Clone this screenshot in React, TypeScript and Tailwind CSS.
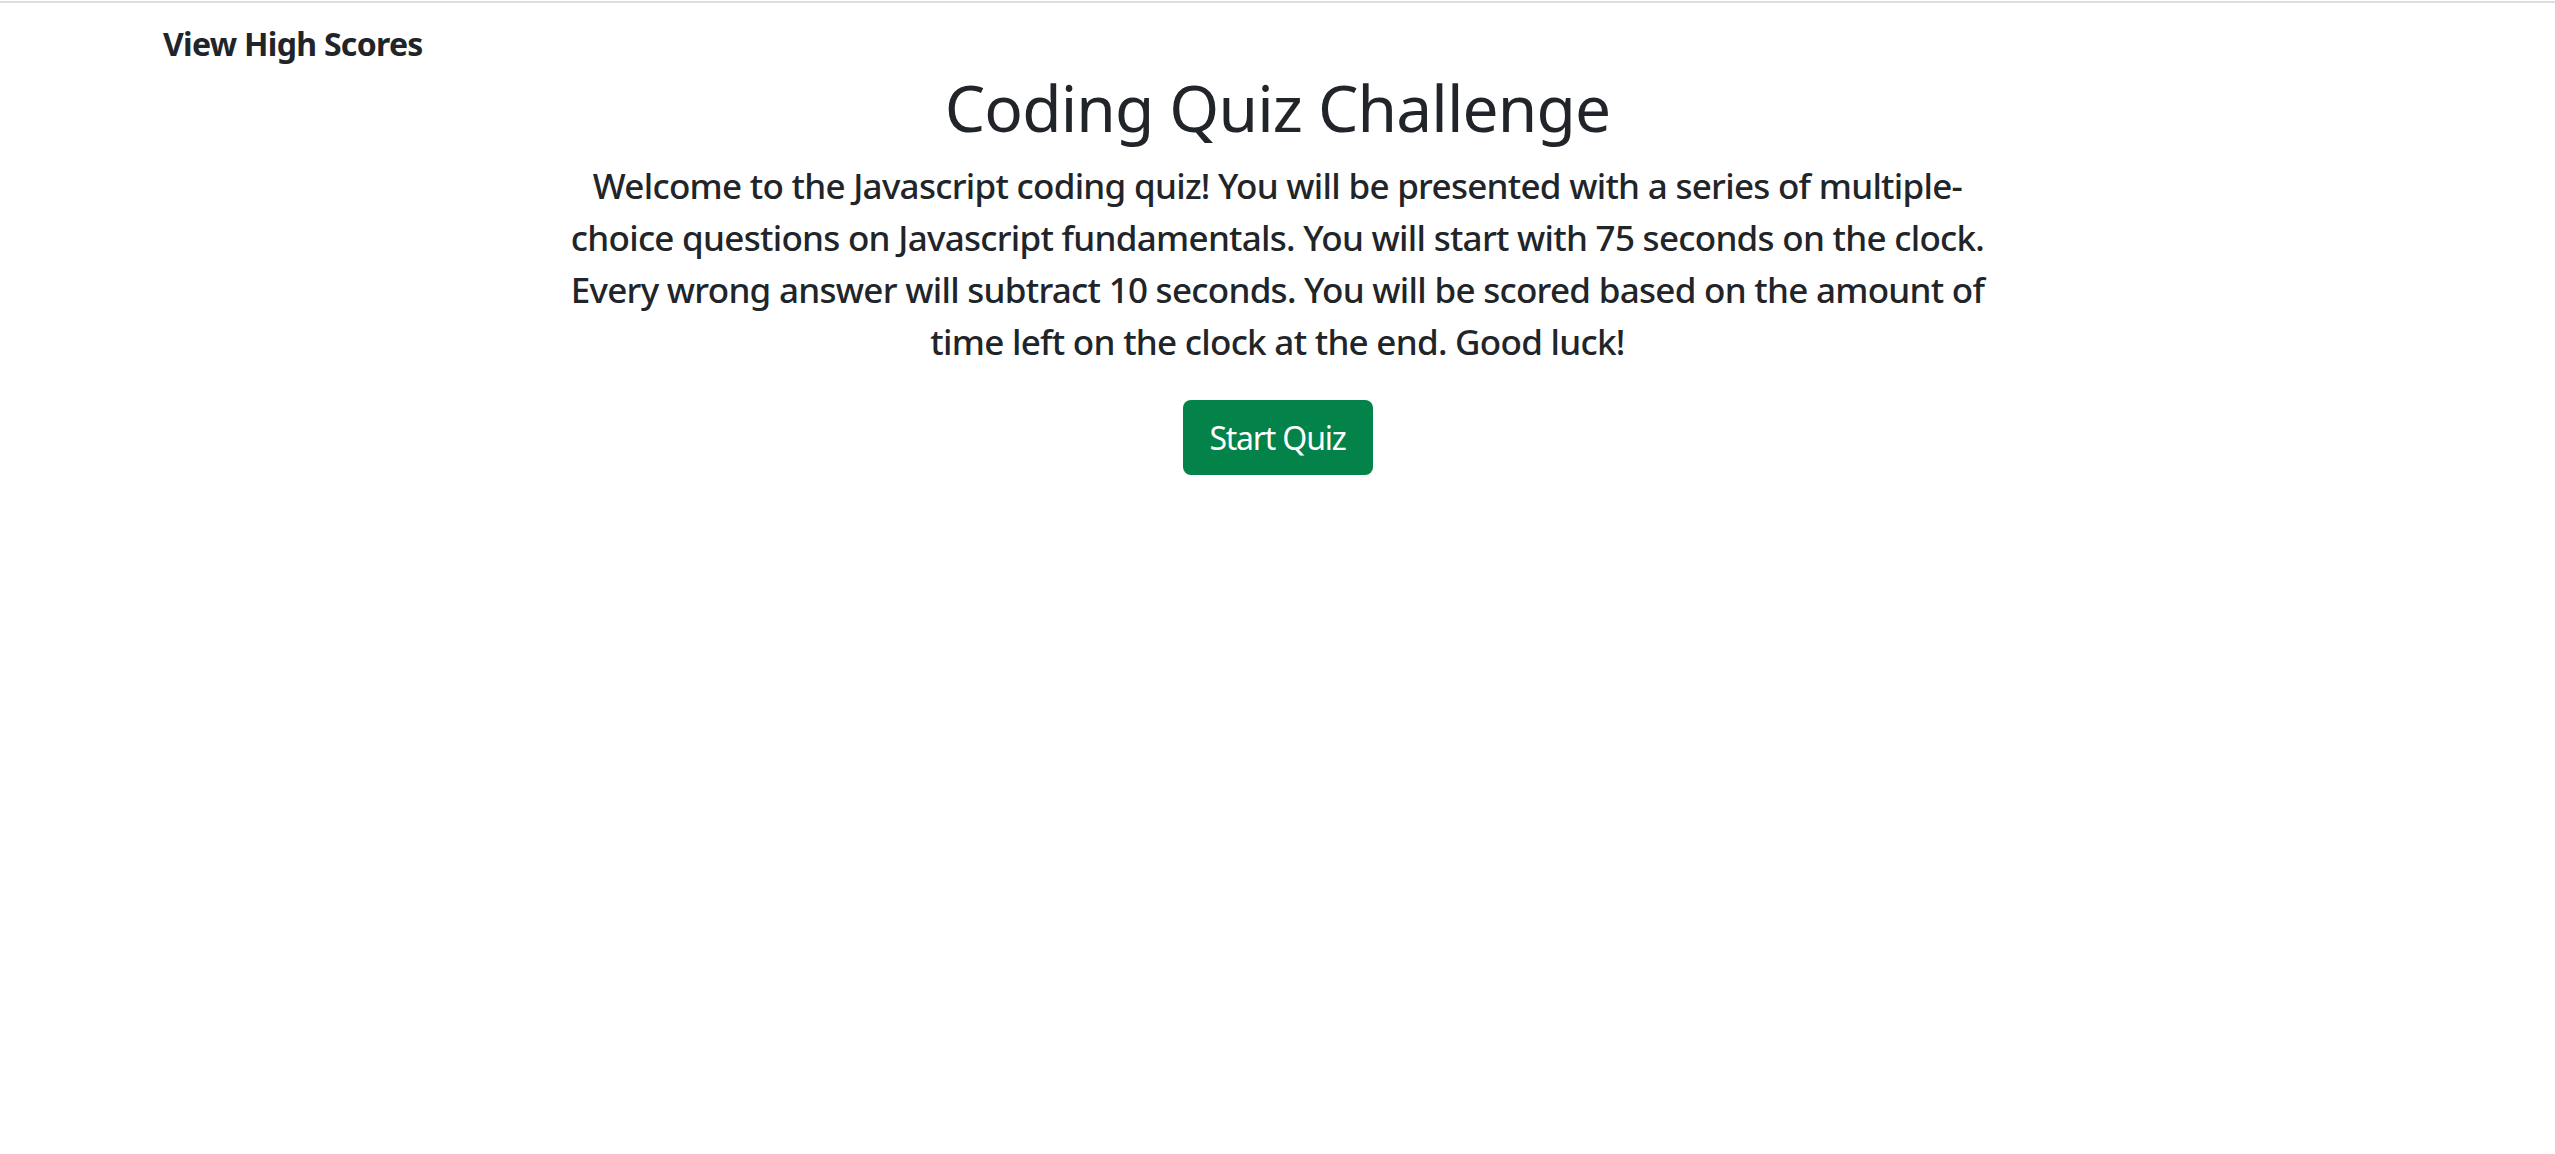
import React from "react";

export default function App() {
  return (
    <div className="min-h-[1154px] w-full bg-white pt-[1px] text-[#212529]" style={{ fontFamily: '"Noto Sans", "Open Sans", sans-serif' }}>
      <div className="h-[2px] w-full bg-[#dedde3]" />
      <header className="pl-[163px] pt-[21px]">
        <a className="block text-[32px] leading-[40px] font-bold tracking-[-0.7px] text-[#212529]">View High Scores</a>
      </header>
      <main className="mt-[8px] flex flex-col items-center">
        <h1 className="text-[64px] leading-[72px] font-normal tracking-[-0.85px]">Coding Quiz Challenge</h1>
        <p className="mt-[16px] text-center text-[35px] leading-[52px] font-medium tracking-[-0.72px]">
          Welcome to the Javascript coding quiz! You will be presented with a series of multiple-
          <br />
          choice questions on Javascript fundamentals. You will start with 75 seconds on the clock.
          <br />
          Every wrong answer will subtract 10 seconds. You will be scored based on the amount of
          <br />
          time left on the clock at the end. Good luck!
        </p>
        <button className="mt-[32px] flex h-[75px] w-[190px] items-center justify-center rounded-[8px] bg-[#03824a] text-[32px] tracking-[-1.2px] text-white">
          Start Quiz
        </button>
      </main>
    </div>
  );
}
